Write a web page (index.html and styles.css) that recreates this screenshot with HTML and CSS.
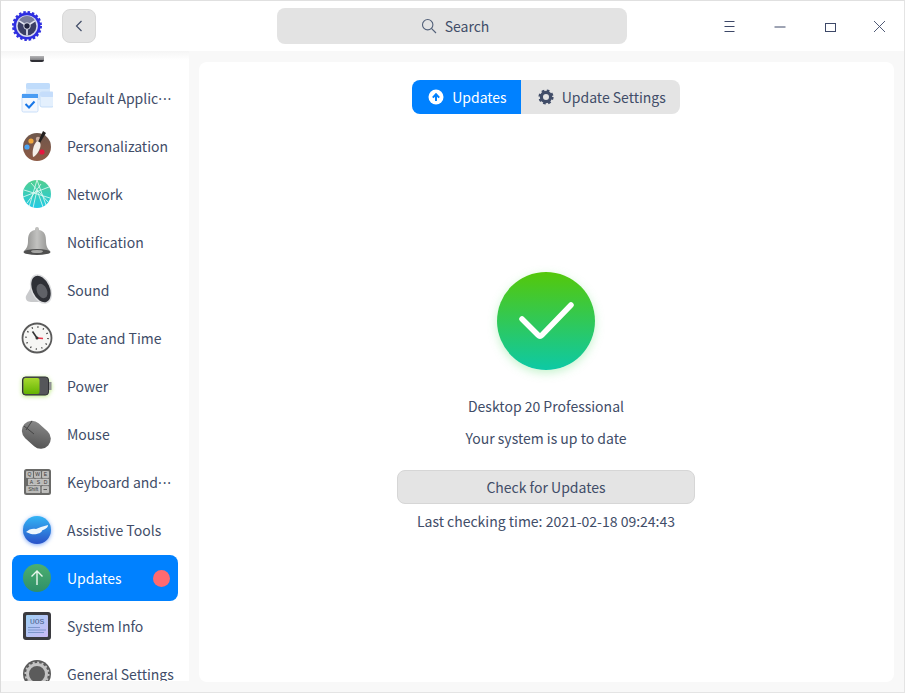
FILE: index.html
```html
<!DOCTYPE html>
<html>
<head>
    <meta charset="UTF-8">
    <title>Control Center</title>
    <link rel="stylesheet" href="styles.css">
</head>
<body>
    <div class="window">
        <header class="titlebar">
            <div class="titlebar-left">
                <svg class="app-logo" width="30" height="30" viewBox="0 0 32 32">
                    <circle cx="16" cy="16" r="14.4" fill="#2f2fe0"/>
                    <circle cx="16" cy="16" r="14.6" fill="none" stroke="#2f2fe0" stroke-width="2.8" stroke-dasharray="2.6 2"/>
                    <circle cx="16" cy="16" r="11.6" fill="#d9dcee"/>
                    <circle cx="16" cy="16" r="10" fill="#3b3f66"/>
                    <path d="M16 16 L7.5 10 A10 10 0 0 1 24.5 10 Z" fill="#7a7e9c"/>
                    <path d="M16 16 L16 26 M16 16 L7.5 10.5 M16 16 L24.5 10.5" stroke="#e4e6f2" stroke-width="1.8"/>
                    <circle cx="16" cy="16" r="3.5" fill="#20233f" stroke="#e4e6f2" stroke-width="1"/>
                </svg>
                <button class="back-btn">
                    <svg width="10" height="14" viewBox="0 0 10 14"><path d="M7.5 2 L2.5 7 L7.5 12" fill="none" stroke="#414d68" stroke-width="1.2"/></svg>
                </button>
            </div>
            <div class="search">
                <svg width="16" height="16" viewBox="0 0 16 16"><circle cx="6.7" cy="6.7" r="5.2" fill="none" stroke="#526079" stroke-width="1.1"/><path d="M10.4 10.4 L15 15" stroke="#526079" stroke-width="1.1"/></svg>
                <span>Search</span>
            </div>
            <div class="window-controls">
                <button class="win-btn">
                    <svg width="12" height="12" viewBox="0 0 12 12"><path d="M0.5 1.5 H10.5 M0.5 6.5 H10.5 M0.5 11.5 H10.5" stroke="#3d4868" stroke-width="1"/></svg>
                </button>
                <button class="win-btn">
                    <svg width="12" height="12" viewBox="0 0 12 12"><path d="M0.5 7 H11.5" stroke="#3d4868" stroke-width="1"/></svg>
                </button>
                <button class="win-btn">
                    <svg width="12" height="12" viewBox="0 0 12 12"><rect x="1.5" y="3.5" width="10" height="8" fill="none" stroke="#3d4868" stroke-width="1"/></svg>
                </button>
                <button class="win-btn">
                    <svg width="12" height="12" viewBox="0 0 12 12"><path d="M0 1 L11 12 M11 1 L0 12" stroke="#3d4868" stroke-width="0.9"/></svg>
                </button>
            </div>
        </header>

        <div class="content">
            <nav class="sidebar">
                <div class="nav-list">
                    <div class="nav-item">
                        <span class="nav-icon">
                            <svg width="32" height="32" viewBox="0 0 32 32"><path d="M9 22 H23 V26 Q23 28 21 28 H11 Q9 28 9 26 Z" fill="#2f2f35"/></svg>
                        </span>
                    </div>
                    <div class="nav-item">
                        <span class="nav-icon">
                            <svg width="32" height="32" viewBox="0 0 32 32">
                                <rect x="5" y="1" width="24" height="17" rx="2" fill="#d6e8fc"/>
                                <rect x="5" y="1" width="24" height="6" rx="2" fill="#c0dcfb"/>
                                <rect x="19" y="10" width="14" height="15" rx="2" fill="#e4f0fd" stroke="#c5ddf8" stroke-width="1"/>
                                <rect x="19" y="10" width="14" height="5" rx="2" fill="#c5ddfb"/>
                                <rect x="1" y="12" width="16" height="18" rx="1.5" fill="#f4f8fe" stroke="#c9dffa" stroke-width="1"/>
                                <rect x="1" y="12" width="16" height="4" fill="#4a9cf3"/>
                                <path d="M4.5 22 L8 25.5 L13.5 19.5" fill="none" stroke="#1977e8" stroke-width="2"/>
                            </svg>
                        </span>
                        <span class="nav-label">Default Applic<span class="elide">···</span></span>
                    </div>
                    <div class="nav-item">
                        <span class="nav-icon">
                            <svg width="32" height="32" viewBox="0 0 32 32">
                                <defs><linearGradient id="palette" x1="0" y1="0" x2="0" y2="1"><stop offset="0" stop-color="#6e574c"/><stop offset="1" stop-color="#8d5a45"/></linearGradient></defs>
                                <circle cx="16" cy="17" r="14" fill="url(#palette)"/>
                                <circle cx="10" cy="11" r="2.6" fill="#f0a63c"/>
                                <circle cx="17" cy="9" r="2.2" fill="#c9ada0"/>
                                <circle cx="6" cy="17" r="2.6" fill="#4aa3f2"/>
                                <circle cx="21" cy="22" r="2.6" fill="#e5163f"/>
                                <path d="M22 1 L25 3 L19 13 L17 12 Z" fill="#23201f"/>
                                <path d="M16 11 C20 12 20 15 19 18 C17 24 13 27 12 27 C11 22 12 15 16 11 Z" fill="#f4efe9"/>
                            </svg>
                        </span>
                        <span class="nav-label">Personalization</span>
                    </div>
                    <div class="nav-item">
                        <span class="nav-icon">
                            <svg width="32" height="32" viewBox="0 0 32 32">
                                <defs><linearGradient id="net" x1="0" y1="0" x2="0" y2="1"><stop offset="0" stop-color="#52cf8f"/><stop offset="1" stop-color="#22cbe4"/></linearGradient></defs>
                                <circle cx="16" cy="16" r="14" fill="url(#net)"/>
                                <path d="M16 2 L8 29 M16 2 L25 27 M3 12 L29 20 M2 19 L28 9 M6 25 L20 6 M10 5 L27 24 M16 12 L12 30 M16 12 L22 29" stroke="#eafbf6" stroke-width="0.8" fill="none"/>
                            </svg>
                        </span>
                        <span class="nav-label">Network</span>
                    </div>
                    <div class="nav-item">
                        <span class="nav-icon">
                            <svg width="32" height="32" viewBox="0 0 32 32">
                                <defs><linearGradient id="bell" x1="0" y1="0" x2="1" y2="0"><stop offset="0" stop-color="#8a8a88"/><stop offset="0.5" stop-color="#c2c2c0"/><stop offset="1" stop-color="#8e8e8c"/></linearGradient></defs>
                                <path d="M16 1 C18 1 18 3 18 4 C24 5 25 10 25 15 C25 21 27 23 29 25 L3 25 C5 23 7 21 7 15 C7 10 8 5 14 4 C14 3 14 1 16 1 Z" fill="url(#bell)"/>
                                <ellipse cx="16" cy="26" rx="13.5" ry="3" fill="#4f4f4f"/>
                                <ellipse cx="16" cy="25.5" rx="6" ry="1.6" fill="#a5a5a3"/>
                            </svg>
                        </span>
                        <span class="nav-label">Notification</span>
                    </div>
                    <div class="nav-item">
                        <span class="nav-icon">
                            <svg width="32" height="32" viewBox="0 0 32 32">
                                <path d="M5 22 L13 8 L21 28 L10 28 C6 28 4 25 5 22 Z" fill="#c9cacc"/>
                                <ellipse cx="20" cy="15" rx="10" ry="15.5" transform="rotate(-24 20 15)" fill="#dcdddf"/>
                                <ellipse cx="20" cy="15" rx="8.6" ry="14" transform="rotate(-24 20 15)" fill="#2e3036"/>
                                <ellipse cx="21" cy="17" rx="5" ry="7.5" transform="rotate(-24 21 17)" fill="#5f6167"/>
                            </svg>
                        </span>
                        <span class="nav-label">Sound</span>
                    </div>
                    <div class="nav-item">
                        <span class="nav-icon">
                            <svg width="32" height="32" viewBox="0 0 32 32">
                                <circle cx="16" cy="16" r="14.5" fill="#f6f6f4" stroke="#5a5a5a" stroke-width="1.8"/>
                                <circle cx="16" cy="16" r="11" fill="none" stroke="#444" stroke-width="1.6" stroke-dasharray="1.2 4.56"/>
                                <path d="M16 16 L11.5 9.5" stroke="#333" stroke-width="1.6"/>
                                <path d="M16 16 L22 16.5" stroke="#e8354a" stroke-width="1.6"/>
                                <circle cx="16" cy="16" r="1.5" fill="#333"/>
                            </svg>
                        </span>
                        <span class="nav-label">Date and Time</span>
                    </div>
                    <div class="nav-item">
                        <span class="nav-icon nav-icon-glow">
                            <svg width="32" height="32" viewBox="0 0 32 32">
                                <defs><linearGradient id="batt" x1="0" y1="0" x2="0" y2="1"><stop offset="0" stop-color="#a7d92e"/><stop offset="1" stop-color="#63b401"/></linearGradient></defs>
                                <rect x="1.5" y="7" width="26" height="18" rx="3" fill="#55565a" stroke="#2f3033"/>
                                <rect x="28" y="12" width="2.5" height="8" fill="#909193"/>
                                <rect x="2.5" y="8" width="16" height="16" rx="2" fill="url(#batt)"/>
                            </svg>
                        </span>
                        <span class="nav-label">Power</span>
                    </div>
                    <div class="nav-item">
                        <span class="nav-icon">
                            <svg width="32" height="32" viewBox="0 0 32 32">
                                <defs><linearGradient id="mouse" x1="0" y1="0" x2="1" y2="1"><stop offset="0" stop-color="#8f8f8f"/><stop offset="1" stop-color="#4e4e4e"/></linearGradient></defs>
                                <rect x="0" y="7" width="32" height="20" rx="10" transform="rotate(42 16 16)" fill="url(#mouse)"/>
                                <path d="M3 8 L13 16 M11 3 L5 12" stroke="#444" stroke-width="1" fill="none"/>
                            </svg>
                        </span>
                        <span class="nav-label">Mouse</span>
                    </div>
                    <div class="nav-item">
                        <span class="nav-icon">
                            <svg width="32" height="32" viewBox="0 0 32 32">
                                <rect x="3" y="3" width="27" height="26" rx="2.5" fill="#6a6a68"/>
                                <path d="M5.5 5.5 H11.5 V11.5 H5.5 Z M13.5 5.5 H19.5 V11.5 H13.5 Z M21.5 5.5 H27.5 V11.5 H21.5 Z M7.5 13 H13.5 V19 H7.5 Z M14.5 13 H20.5 V19 H14.5 Z M21.5 13 H27.5 V19 H21.5 Z M5.5 20.5 H19 V26.5 H5.5 Z M21 20.5 H27.5 V26.5 H21 Z" fill="#bcbcba" stroke="#e3e3e1" stroke-width="0.5"/>
                                <text class="key-text" x="8.5" y="10.3" text-anchor="middle">Q</text>
                                <text class="key-text" x="16.5" y="10.3" text-anchor="middle">W</text>
                                <text class="key-text" x="24.5" y="10.3" text-anchor="middle">E</text>
                                <text class="key-text" x="10.5" y="17.8" text-anchor="middle">A</text>
                                <text class="key-text" x="17.5" y="17.8" text-anchor="middle">S</text>
                                <text class="key-text" x="24.5" y="17.8" text-anchor="middle">D</text>
                                <text class="key-text" x="12.2" y="25.3" text-anchor="middle">Shift</text>
                                <path d="M22.5 23.5 H26" stroke="#444" stroke-width="0.8"/>
                            </svg>
                        </span>
                        <span class="nav-label">Keyboard and<span class="elide">···</span></span>
                    </div>
                    <div class="nav-item">
                        <span class="nav-icon nav-icon-halo">
                            <svg width="32" height="32" viewBox="0 0 32 32">
                                <defs><linearGradient id="assist" x1="0" y1="0" x2="0" y2="1"><stop offset="0" stop-color="#33b5f5"/><stop offset="1" stop-color="#2a52c8"/></linearGradient></defs>
                                <circle cx="16" cy="16" r="14" fill="url(#assist)"/>
                                <path d="M5 18 C8 15 12 14 15 15 L20 13 L27 11 C27 14 24 15 21 16.5 C21 19 15 21 10 20 Z" fill="#eef7fd"/>
                            </svg>
                        </span>
                        <span class="nav-label">Assistive Tools</span>
                    </div>
                    <div class="nav-item nav-item-active">
                        <span class="nav-icon">
                            <svg width="32" height="32" viewBox="0 0 32 32">
                                <defs><linearGradient id="upd" x1="0" y1="0" x2="0" y2="1"><stop offset="0" stop-color="#4caf70"/><stop offset="1" stop-color="#2f8f68"/></linearGradient></defs>
                                <circle cx="16" cy="16" r="14" fill="url(#upd)"/>
                                <path d="M16 23 V9 M10.5 14.5 L16 9 L21.5 14.5" fill="none" stroke="#e8f6ee" stroke-width="1.4"/>
                            </svg>
                        </span>
                        <span class="nav-label">Updates</span>
                        <span class="nav-badge"></span>
                    </div>
                    <div class="nav-item">
                        <span class="nav-icon">
                            <svg width="32" height="32" viewBox="0 0 32 32">
                                <defs><linearGradient id="sys" x1="0" y1="0" x2="1" y2="1"><stop offset="0" stop-color="#9fd0f6"/><stop offset="1" stop-color="#cbb9f5"/></linearGradient></defs>
                                <rect x="2" y="2" width="28" height="28" rx="3" fill="#3b3b40"/>
                                <rect x="5" y="5" width="22" height="22" rx="1" fill="url(#sys)"/>
                                <path d="M7 17.5 H19 M7 20 H25 M7 22.5 H23" stroke="#6f8ac0" stroke-width="0.8"/>
                                <text class="chip-text" x="9" y="13.5">UOS</text>
                            </svg>
                        </span>
                        <span class="nav-label">System Info</span>
                    </div>
                    <div class="nav-item">
                        <span class="nav-icon">
                            <svg width="32" height="32" viewBox="0 0 32 32">
                                <circle cx="16" cy="16" r="14" fill="#5b5b5b"/>
                                <circle cx="16" cy="16" r="9.5" fill="none" stroke="#c4c4c4" stroke-width="3"/>
                                <circle cx="16" cy="16" r="11.5" fill="none" stroke="#c4c4c4" stroke-width="2" stroke-dasharray="2 2.5"/>
                            </svg>
                        </span>
                        <span class="nav-label">General Settings</span>
                    </div>
                </div>
            </nav>

            <main class="panel">
                <div class="tabs">
                    <div class="tab tab-active">
                        <svg width="16" height="16" viewBox="0 0 16 16"><circle cx="8" cy="8" r="7.5" fill="#fff"/><path d="M8 12 V6 M4.8 8.6 L8 5.2 L11.2 8.6" fill="none" stroke="#0081ff" stroke-width="2"/></svg>
                        <span>Updates</span>
                    </div>
                    <div class="tab tab-settings">
                        <svg width="16" height="16" viewBox="0 0 16 16"><circle cx="8" cy="8" r="4.6" fill="none" stroke="#414d68" stroke-width="3.2"/><circle cx="8" cy="8" r="6.4" fill="none" stroke="#414d68" stroke-width="2.4" stroke-dasharray="2.6 2.43"/></svg>
                        <span>Update Settings</span>
                    </div>
                </div>

                <div class="status">
                    <div class="status-icon">
                        <svg width="60" height="44" viewBox="0 0 60 44"><path d="M6 20 L22 36 Q24 38 26 36 L55 6" fill="none" stroke="#fff" stroke-width="5.5" stroke-linecap="round"/></svg>
                    </div>
                    <p class="status-line status-version">Desktop 20 Professional</p>
                    <p class="status-line status-message">Your system is up to date</p>
                    <button class="check-btn">Check for Updates</button>
                    <p class="status-line status-time">Last checking time: 2021-02-18 09:24:43</p>
                </div>
            </main>
        </div>
    </div>
</body>
</html>
```

FILE: styles.css
```css
html, body {
    height: 100%;
}
body {
    font-family: "Noto Sans CJK SC", "Noto Sans", sans-serif;
    font-size: 14px;
    color: #414d68;
    margin: 0;
    background: #f8f8f8;
    overflow: hidden;
}
.window {
    height: 693px;
    box-sizing: border-box;
    border-top: 1px solid #e0e0e0;
    border-left: 1px solid #dcdcdc;
    border-right: 1px solid #e4e4e4;
    border-bottom: 1px solid #e4e4e4;
    display: flex;
    flex-direction: column;
}
.titlebar {
    height: 50px;
    flex: none;
    background: white;
    display: grid;
    grid-template-columns: 276px 350px 1fr;
    align-items: center;
}
.titlebar-left {
    display: flex;
    align-items: center;
    gap: 20px;
    padding-left: 11px;
}
.app-logo {
    display: block;
}
.back-btn {
    width: 34px;
    height: 34px;
    padding: 0;
    display: flex;
    align-items: center;
    justify-content: center;
    background: #e4e4e4;
    border: 1px solid #d8d8d8;
    border-radius: 8px;
}
.search {
    height: 36px;
    box-sizing: border-box;
    padding-left: 6px;
    background: #e3e3e3;
    border-radius: 8px;
    display: flex;
    align-items: center;
    justify-content: center;
    gap: 8px;
    font-size: 14px;
}
.search svg {
    display: block;
}
.window-controls {
    display: flex;
    justify-content: flex-end;
    align-items: center;
    height: 50px;
    margin-right: -1px;
}
.win-btn {
    width: 50px;
    height: 50px;
    padding: 0;
    background: none;
    border: none;
    display: flex;
    align-items: center;
    justify-content: center;
}
.content {
    flex: 1;
    min-height: 0;
    display: flex;
}
.sidebar {
    width: 188px;
    flex: none;
    height: 630px;
    background: white;
    overflow: hidden;
    position: relative;
}
/* fade where the list scrolls under the titlebar */
.sidebar::before {
    content: "";
    position: absolute;
    top: 0;
    left: 0;
    right: 0;
    height: 9px;
    background: linear-gradient(180deg, #f5f5f5 0%, rgba(255, 255, 255, 0.4) 100%);
}
.nav-list {
    margin-top: -24px;
    padding: 0 11px;
    display: flex;
    flex-direction: column;
    gap: 2px;
}
.nav-item {
    height: 46px;
    flex: none;
    display: flex;
    align-items: center;
    padding: 0 8px 0 9px;
    border-radius: 8px;
    font-size: 14px;
    white-space: nowrap;
}
.nav-icon {
    width: 32px;
    height: 32px;
    flex: none;
    margin-right: 14px;
}
.nav-icon svg {
    display: block;
}
.nav-icon-glow svg {
    filter: drop-shadow(0 1px 2px rgba(140, 220, 40, 0.6));
}
.nav-icon-halo svg {
    filter: drop-shadow(0 1px 2px rgba(40, 110, 240, 0.6));
}
.nav-label {
    flex: 1;
}
.elide {
    font-family: "Noto Sans", sans-serif;
    letter-spacing: 0.9px;
}
.nav-item-active {
    background: #0081ff;
    color: white;
}
.nav-badge {
    width: 17px;
    height: 17px;
    border-radius: 50%;
    background: #ff6a6f;
    flex: none;
}
.chip-text {
    font-family: "Liberation Mono", monospace;
    font-size: 8px;
    fill: #4a5f8c;
}
.key-text {
    font-family: "Liberation Sans", sans-serif;
    font-size: 5px;
    fill: #3a3a3a;
}
.panel {
    width: 695px;
    height: 620px;
    box-sizing: border-box;
    padding-right: 1px;
    margin: 11px 0 0 10px;
    background: white;
    border-radius: 8px;
    display: flex;
    flex-direction: column;
    align-items: center;
}
.tabs {
    margin-top: 18px;
    display: flex;
    height: 34px;
    border-radius: 8px;
    overflow: hidden;
    font-size: 14px;
}
.tab {
    display: flex;
    align-items: center;
    gap: 8px;
    padding: 0 14px 0 16px;
    background: #e4e4e4;
}
.tab svg {
    display: block;
}
.tab-active {
    background: #0081ff;
    color: white;
}
.tab-settings {
    padding-left: 17px;
}
.status {
    display: flex;
    flex-direction: column;
    align-items: center;
    margin-top: 158px;
}
.status-icon {
    width: 98px;
    height: 98px;
    border-radius: 50%;
    background: linear-gradient(180deg, #54c80a 0%, #0dc9a5 100%);
    box-shadow: 0 3px 10px rgba(90, 220, 110, 0.35);
    display: flex;
    align-items: center;
    justify-content: center;
}
.status-icon svg {
    display: block;
}
.status-line {
    margin: 0;
    line-height: 20px;
}
.status-version {
    margin-top: 26px;
}
.status-message {
    margin-top: 12px;
}
.check-btn {
    width: 298px;
    height: 34px;
    margin-top: 22px;
    background: #e4e4e4;
    border: 1px solid #d6d6d6;
    border-radius: 8px;
    font-family: inherit;
    font-size: 14px;
    color: #414d68;
}
.status-time {
    margin-top: 7px;
}
```
